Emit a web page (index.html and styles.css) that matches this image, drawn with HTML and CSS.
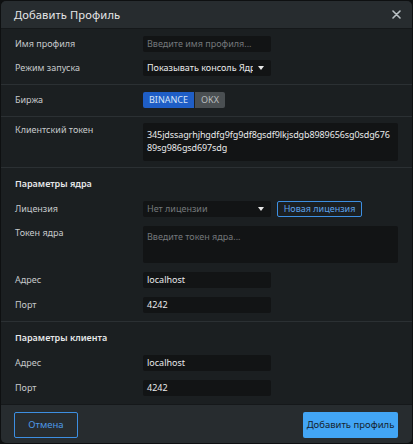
FILE: index.html
```html
<!DOCTYPE html>
<html lang="ru">
<head>
<meta charset="utf-8">
<title>Добавить Профиль</title>
<link rel="stylesheet" href="styles.css">
</head>
<body>
<div class="modal">
  <div class="header">
    <span class="title">Добавить Профиль</span>
    <svg class="close" width="9" height="9" viewBox="0 0 9 9"><path d="M1 1 L8 8 M8 1 L1 8" stroke="#b9c0c4" stroke-width="1.6" stroke-linecap="round"/></svg>
  </div>
  <div class="content">
    <div class="section">
      <div class="row">
        <div class="label">Имя профиля</div>
        <div class="input placeholder">Введите имя профиля...</div>
      </div>
      <div class="row">
        <div class="label">Режим запуска</div>
        <div class="input select"><span class="sel-text">Показывать консоль Ядра</span><span class="arrow"></span></div>
      </div>
    </div>
    <div class="section">
      <div class="row">
        <div class="label">Биржа</div>
        <div class="toggle">
          <span class="tg active">BINANCE</span><span class="tg">OKX</span>
        </div>
      </div>
    </div>
    <div class="section tight">
      <div class="row top">
        <div class="label">Клиентский токен</div>
        <div class="textarea">345jdssagrhjhgdfg9fg9df8gsdf9lkjsdgb8989656sg0sdg67689sg986gsd697sdg</div>
      </div>
    </div>
    <div class="section wide">
      <div class="heading">Параметры ядра</div>
      <div class="row">
        <div class="label">Лицензия</div>
        <div class="input select placeholder"><span class="sel-text">Нет лицензии</span><span class="arrow"></span></div>
        <span class="btn-outline">Новая лицензия</span>
      </div>
      <div class="row top">
        <div class="label">Токен ядра</div>
        <div class="textarea placeholder">Введите токен ядра...</div>
      </div>
      <div class="row">
        <div class="label">Адрес</div>
        <div class="input">localhost</div>
      </div>
      <div class="row">
        <div class="label">Порт</div>
        <div class="input">4242</div>
      </div>
    </div>
    <div class="section wide last">
      <div class="heading">Параметры клиента</div>
      <div class="row">
        <div class="label">Адрес</div>
        <div class="input">localhost</div>
      </div>
      <div class="row">
        <div class="label">Порт</div>
        <div class="input">4242</div>
      </div>
    </div>
  </div>
  <div class="footer">
    <span class="btn-cancel">Отмена</span>
    <span class="btn-primary">Добавить профиль</span>
  </div>
</div>
</body>
</html>
```
FILE: styles.css
```css
html, body {
  margin: 0;
  padding: 0;
  background: #0e1011;
  width: 413px;
  height: 444px;
  overflow: hidden;
  font-family: "Noto Sans", "Open Sans", sans-serif;
}
.modal {
  margin: 1px;
  width: 411px;
  height: 442px;
  border-radius: 5px;
  overflow: hidden;
  background: #1b1f21;
  display: flex;
  flex-direction: column;
}
.header {
  height: 27px;
  background: #272c2f;
  border-bottom: 1px solid #15181a;
  display: flex;
  align-items: center;
  justify-content: space-between;
  padding: 0 11px 0 13px;
  flex-shrink: 0;
}
.title {
  color: #e4e6e7;
  font-size: 11.2px;
  letter-spacing: 0.1px;
}
.close { display: block; }
.content {
  flex: 1;
  display: flex;
  flex-direction: column;
}
.section {
  padding: 7px 14px 8px 13px;
  border-bottom: 1px solid #2b3033;
  display: flex;
  flex-direction: column;
  gap: 8px;
}
.section.tight { padding-top: 6px; padding-bottom: 6px; }
.section.wide { gap: 9px; padding-top: 8px; }
.section.last { border-bottom: 1px solid #15181a; flex: 1; }
.row {
  display: flex;
  align-items: center;
}
.row.top { align-items: flex-start; }
.label {
  width: 128px;
  flex-shrink: 0;
  color: #c6c9cb;
  font-size: 9px;
  line-height: 16px;
  padding-left: 1px;
}
.row.top .label { line-height: 14px; }
.heading {
  color: #e6e8e9;
  font-size: 9px;
  font-weight: 600;
  line-height: 16px;
  padding-left: 1px;
}
.input {
  width: 128px;
  height: 16px;
  box-sizing: border-box;
  background: #121415;
  border-radius: 2px;
  color: #e9eaeb;
  font-size: 9px;
  line-height: 16px;
  padding: 0 4px;
  white-space: nowrap;
  overflow: hidden;
}
.placeholder { color: #74787b; }
.select {
  display: flex;
  align-items: center;
  padding-right: 6px;
}
.sel-text {
  flex: 1;
  overflow: hidden;
  white-space: nowrap;
}
.arrow {
  width: 0;
  height: 0;
  border-left: 3.5px solid transparent;
  border-right: 3.5px solid transparent;
  border-top: 4px solid #e8e8e8;
  margin-left: 5px;
  margin-right: 1px;
}
.toggle {
  display: flex;
  gap: 1px;
}
.tg {
  width: 30px;
  height: 16px;
  line-height: 16px;
  font-size: 9px;
  text-align: center;
  background: #4a4f52;
  color: #b8bcbe;
  border-radius: 0 2px 2px 0;
}
.tg.active {
  width: 51px;
  background: #1f5ec6;
  color: #d6e4f7;
  border-radius: 2px 0 0 2px;
}
.textarea {
  flex: 1;
  height: 38px;
  box-sizing: border-box;
  background: #121415;
  border-radius: 2px;
  color: #e9eaeb;
  font-size: 9px;
  line-height: 13px;
  letter-spacing: -0.1px;
  padding: 5px 5px 3px 4px;
  word-break: break-all;
}
.textarea.placeholder { color: #74787b; height: 37px; padding-top: 4px; letter-spacing: 0; }
.btn-outline {
  margin-left: 6px;
  width: 85px;
  height: 16px;
  box-sizing: border-box;
  border: 1px solid #3d8fe2;
  border-radius: 2px;
  color: #5da2ea;
  font-size: 9px;
  line-height: 14px;
  text-align: center;
}
.footer {
  height: 39px;
  background: #272c2f;
  display: flex;
  align-items: center;
  justify-content: space-between;
  padding: 0 14px 0 13px;
  flex-shrink: 0;
}
.btn-cancel {
  width: 64px;
  height: 26px;
  box-sizing: border-box;
  border: 1px solid #3d8fe2;
  border-radius: 2px;
  color: #4d98e6;
  font-size: 9.5px;
  display: flex;
  align-items: center;
  justify-content: center;
}
.btn-primary {
  width: 95px;
  height: 26px;
  background: #42a5f5;
  border-radius: 2px;
  color: #15232f;
  font-size: 9.5px;
  display: flex;
  align-items: center;
  justify-content: center;
}
```
